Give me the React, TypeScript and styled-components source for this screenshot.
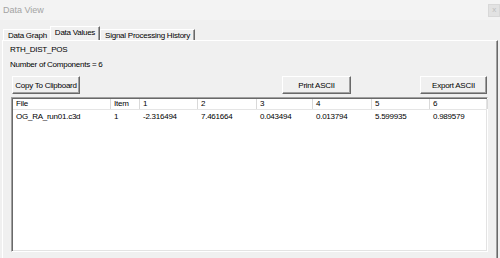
import React from 'react';
import styled, { createGlobalStyle } from 'styled-components';

const GlobalStyle = createGlobalStyle`
  html, body { margin: 0; padding: 0; background: #f0f0f0; }
  body {
    font-family: "Liberation Sans", Arial, sans-serif;
    font-size: 8px;
    letter-spacing: -0.25px;
    color: #000;
  }
  * { box-sizing: border-box; }
`;

const Window = styled.div`
  width: 500px;
  height: 258px;
  display: flex;
  flex-direction: column;
  background: #f0f0f0;
  overflow: hidden;
`;

const TitleBar = styled.div`
  height: 20px;
  flex: none;
  background: #f3f3f3;
  display: flex;
  align-items: flex-start;
  justify-content: space-between;
  padding-left: 3px;
`;

const Title = styled.span`
  font-size: 9px;
  letter-spacing: 0;
  line-height: 20px;
  color: #a3a3a3;
`;

const CloseButton = styled.div`
  width: 12px;
  height: 13px;
  margin-top: 4px;
  background: #e2e2e2;
  border: 1px solid #d8d8d8;
  color: #bdbdbd;
  font-size: 8px;
  line-height: 10px;
  text-align: center;
`;

const Body = styled.div`
  flex: 1;
  display: flex;
  flex-direction: column;
  padding: 6px 2px 0 2px;
  min-height: 0;
`;

const TabStrip = styled.div`
  display: flex;
  align-items: flex-end;
  height: 15px;
  padding-left: 1px;
  margin-bottom: -1px;
`;

const Tab = styled.div<{ $active?: boolean }>`
  height: ${p => (p.$active ? 15 : 12)}px;
  margin-left: ${p => (p.$active ? -2 : 0)}px;
  padding: 0 4px ${p => (p.$active ? 3 : 0)}px 4px;
  display: flex;
  align-items: center;
  white-space: nowrap;
  background: #f0f0f0;
  border-top: 1px solid #fff;
  border-left: 1px solid #fff;
  border-right: 1px solid #696969;
  box-shadow: inset -1px 0 0 #a0a0a0;
`;

const Panel = styled.div`
  flex: 1;
  display: flex;
  flex-direction: column;
  align-items: flex-start;
  padding: 4px 10px 0 9px;
  border-top: 1px solid #fff;
  border-left: 1px solid #fff;
  border-right: 1px solid #696969;
  box-shadow: inset -1px 0 0 #a0a0a0;
`;

const Label = styled.div<{ $gap?: number }>`
  line-height: 9px;
  margin-left: -2px;
  margin-top: ${p => p.$gap ?? 0}px;
`;

const ButtonRow = styled.div`
  display: flex;
  width: 100%;
  margin-top: 7px;
`;

const Button = styled.div<{ $w: number; $mr?: number; $push?: boolean }>`
  width: ${p => p.$w}px;
  height: 18px;
  margin-left: ${p => (p.$push ? 'auto' : '0')};
  margin-right: ${p => p.$mr ?? 0}px;
  display: flex;
  align-items: center;
  justify-content: center;
  background: #f0f0f0;
  border: 1px solid;
  border-color: #fff #696969 #696969 #fff;
  box-shadow: inset -1px -1px 0 #a0a0a0;
  white-space: nowrap;
`;

const List = styled.div`
  width: 477px;
  height: 155px;
  margin: 3px 0 0 -1px;
  background: #fff;
  border: 1px solid;
  border-color: #a0a0a0 #fff #fff #a0a0a0;
  box-shadow: inset 1px 1px 0 #696969, inset -1px -1px 0 #e3e3e3;
  padding: 1px 0 0 1px;
`;

const columns = '98px 29px 58px 59px 56px 59px 58px 58px';

const HeaderRow = styled.div`
  display: grid;
  grid-template-columns: ${columns};
  height: 11px;
  border-bottom: 1px solid #e5e5e5;
`;

const HeaderCell = styled.div`
  padding-left: 3px;
  line-height: 10px;
  border-right: 1px solid #d9d9d9;
  white-space: nowrap;
`;

const DataRow = styled.div`
  display: grid;
  grid-template-columns: ${columns};
  height: 13px;
`;

const Cell = styled.div`
  padding-left: 3px;
  line-height: 13px;
  white-space: nowrap;
`;

const headers = ['File', 'Item', '1', '2', '3', '4', '5', '6'];
const rows = [
  ['OG_RA_run01.c3d', '1', '-2.316494', '7.461664', '0.043494', '0.013794', '5.599935', '0.989579'],
];

export default function App() {
  return (
    <>
      <GlobalStyle />
      <Window>
        <TitleBar>
          <Title>Data View</Title>
          <CloseButton>x</CloseButton>
        </TitleBar>
        <Body>
          <TabStrip>
            <Tab>Data Graph</Tab>
            <Tab $active>Data Values</Tab>
            <Tab>Signal Processing History</Tab>
          </TabStrip>
          <Panel>
            <Label>RTH_DIST_POS</Label>
            <Label $gap={6}>Number of Components = 6</Label>
            <ButtonRow>
              <Button $w={68}>Copy To Clipboard</Button>
              <Button $w={69} $push $mr={69}>Print ASCII</Button>
              <Button $w={67}>Export ASCII</Button>
            </ButtonRow>
            <List>
              <HeaderRow>
                {headers.map(h => (
                  <HeaderCell key={h}>{h}</HeaderCell>
                ))}
              </HeaderRow>
              {rows.map((r, i) => (
                <DataRow key={i}>
                  {r.map((c, j) => (
                    <Cell key={j}>{c}</Cell>
                  ))}
                </DataRow>
              ))}
            </List>
          </Panel>
        </Body>
      </Window>
    </>
  );
}
